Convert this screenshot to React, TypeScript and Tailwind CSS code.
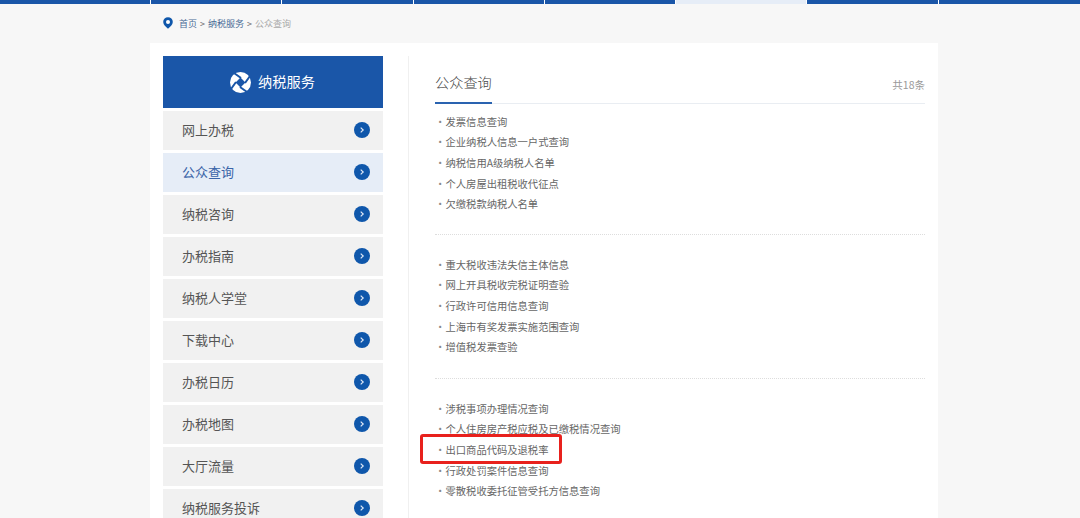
const menu = ["网上办税", "公众查询", "纳税咨询", "办税指南", "纳税人学堂", "下载中心", "办税日历", "办税地图", "大厅流量", "纳税服务投诉"];

const groups = [
  ["发票信息查询", "企业纳税人信息一户式查询", "纳税信用A级纳税人名单", "个人房屋出租税收代征点", "欠缴税款纳税人名单"],
  ["重大税收违法失信主体信息", "网上开具税收完税证明查验", "行政许可信用信息查询", "上海市有奖发票实施范围查询", "增值税发票查验"],
  ["涉税事项办理情况查询", "个人住房房产税应税及已缴税情况查询", "出口商品代码及退税率", "行政处罚案件信息查询", "零散税收委托征管受托方信息查询"],
];

function Logo() {
  return (
    <svg width="21" height="21" viewBox="0 0 21 21" className="mr-[7px]">
      <circle cx="10.5" cy="10.5" r="10.5" fill="#fff" />
      <path d="M10.5 5.6 L15.4 10.5 L10.5 15.4 L5.6 10.5 Z" fill="#1a56a8" />
      <path d="M11 6 L4 1 M15 11 L20 4 M10 15 L17 20 M6 10 L1 17" stroke="#1a56a8" strokeWidth="2" fill="none" />
    </svg>
  );
}

function Arrow() {
  return (
    <svg width="16" height="16" viewBox="0 0 16 16" className="mt-[-0.5px]">
      <circle cx="8" cy="8" r="8" fill="#0f57ab" />
      <path d="M6.7 5.6 L9.2 8 L6.7 10.4" fill="none" stroke="#dfe8f5" strokeWidth="1.2" />
    </svg>
  );
}

export default function App() {
  return (
    <div className="h-[518px] w-[1080px] overflow-hidden bg-[#f7f7f7] font-['Noto_Sans_CJK_SC','Liberation_Sans',sans-serif]">
      <div className="flex h-[3.5px] bg-[#1a56a8] pl-[150px]">
        {[0, 1, 2, 3, 4, 5, 6].map((i) => (
          <div
            key={i}
            className={`h-full w-[131.3px] border-l border-white ${i === 4 ? "bg-[#e6edf7]" : "bg-[#1a56a8]"}`}
          />
        ))}
      </div>

      <div className="ml-[150px] w-[788px]">
        <div className="flex h-[39.5px] items-center pl-[13px] text-[9px]">
          <svg width="10" height="12" viewBox="0 0 10 12" className="mr-[6px]">
            <path
              d="M5 0.2 A4.8 4.8 0 0 1 9.8 5 C9.8 7.6 7 10 5 11.8 C3 10 0.2 7.6 0.2 5 A4.8 4.8 0 0 1 5 0.2 Z"
              fill="#0f57ab"
            />
            <circle cx="5" cy="4.9" r="2" fill="#fff" />
          </svg>
          <span className="text-[#4a6c96]">首页</span>
          <span className="mx-[3px] text-[#666]">&gt;</span>
          <span className="text-[#4a6c96]">纳税服务</span>
          <span className="mx-[3px] text-[#666]">&gt;</span>
          <span className="text-[#aaa]">公众查询</span>
        </div>

        <div className="flex h-[475px] bg-white pt-[13px] pl-[13px]">
          <aside className="w-[220px] shrink-0">
            <div className="flex h-[52px] items-center justify-center bg-[#1a56a8] pr-[1px] text-[14.2px] text-white">
              <Logo />
              纳税服务
            </div>
            <ul className="mt-[3px] flex flex-col gap-[3px]">
              {menu.map((name, i) => (
                <li
                  key={name}
                  className={`flex h-[39px] shrink-0 items-center justify-between pr-[13px] pl-[19px] text-[13px] ${
                    i === 1 ? "bg-[#e6edf7] text-[#3a64a8]" : "bg-[#f1f1f1] text-[#555]"
                  }`}
                >
                  <span className="mt-[-2px]">{name}</span>
                  <Arrow />
                </li>
              ))}
            </ul>
          </aside>

          <main className="ml-[25px] w-[517px] border-l border-[#f0f0f0] pl-[26px]">
            <div className="flex h-[48px] items-start justify-between border-b border-[#e9edf2] pt-[16px]">
              <h1 className="relative h-[32px] w-[57px] text-[14.2px] leading-[21px] font-light text-[#444]">
                公众查询
                <span className="absolute top-[30px] left-0 h-[2px] w-[57px] bg-[#2a63b0]" />
              </h1>
              <span className="pt-[5px] text-[10.5px] leading-[15px] text-[#999]">共18条</span>
            </div>

            {groups.map((group, g) => (
              <div
                key={g}
                className={
                  g === 0
                    ? "h-[130.5px] border-b border-dotted border-[#ddd] pt-[7px]"
                    : g === 1
                      ? "h-[144px] border-b border-dotted border-[#ddd] pt-[19.5px]"
                      : "pt-[19.5px]"
                }
              >
                <ul>
                  {group.map((text) => (
                    <li key={text} className="relative flex h-[20.7px] items-center text-[10.3px] text-[#666]">
                      <span className="w-[10.5px] text-[#888]">·</span>
                      {text}
                      {text === "出口商品代码及退税率" && (
                        <span className="absolute top-[-5px] left-[-15px] h-[30px] w-[142px] rounded-[3px] border-[3px] border-[#e8211d]" />
                      )}
                    </li>
                  ))}
                </ul>
              </div>
            ))}
          </main>
        </div>
      </div>
    </div>
  );
}
